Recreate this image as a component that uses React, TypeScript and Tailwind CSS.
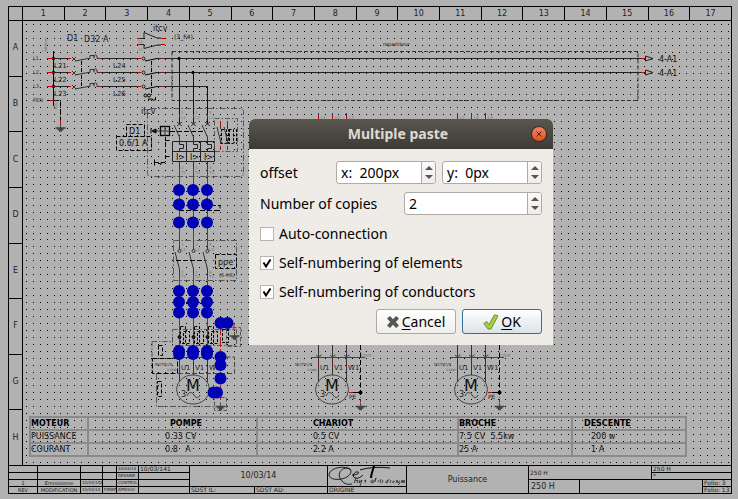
import React, { useState } from "react";

const COLUMNS = Array.from({ length: 17 }, (_, i) => i + 1);
const ROWS = ["A", "B", "C", "D", "E", "F", "G", "H"];

const GRID_STEP = 6.95;

function gridDots() {
  let d = "";
  for (let r = 0; r < 64; r++) {
    const y = Math.round(24 + r * GRID_STEP);
    for (let c = 0; c < 102; c++) {
      const x = Math.floor(26.2 + c * GRID_STEP);
      if (x < 730 && y < 464) d += `M${x} ${y}h1v1h-1z`;
    }
  }
  return d;
}

const DOTS = gridDots();
const PHASES = [179, 193, 207];

function Ground({ x, y }: { x: number; y: number }) {
  return (
    <g className="stroke-[#444]">
      <path d={`M${x} ${y - 4}V${y}`} />
      <path d={`M${x - 5} ${y}h10M${x - 3} ${y + 1.5}h6M${x - 1.5} ${y + 3}h3`} strokeWidth="1.3" />
    </g>
  );
}

function Tiny({ x, y, children }: { x: number; y: number; children: React.ReactNode }) {
  return (
    <text x={x} y={y} className="fill-[#777] stroke-none text-[4px]">
      {children}
    </text>
  );
}

function MotorSymbol({ x }: { x: number }) {
  return (
    <g>
      <ellipse cx={x} cy="389.5" rx="16.5" ry="14.5" className="stroke-[#444]" />
      <text x={x} y="391" textAnchor="middle" className="fill-[#111] stroke-none text-[16px]">M</text>
      <text x={x - 12} y="397" className="fill-[#222] stroke-none text-[8px]">3</text>
      <path d={`M${x - 6} 396c2-5 5-4 7-1s4 4 6 0`} className="stroke-[#333]" />
    </g>
  );
}

function IdleMotor({ x }: { x: number }) {
  const taps = [x - 14, x, x + 14];
  return (
    <g>
      {taps.map((t, i) => (
        <g key={t}>
          <path d={`M${t}.5 113v3`} className="stroke-[#2a2a90]" />
          <path d={`M${t}.5 116v3`} className="stroke-[#c00000]" />
          <Tiny x={t + 3} y={119}>{`L${i + 1}`}</Tiny>
          <path d={`M${t}.5 345V${i === 1 ? 375 : 382}`} className="stroke-[#333]" />
          <path d={`M${t - 2} 355l2.500 2l2.500 -2`} className="stroke-[#444]" />
          <path d={`M${t}.5 363.500v2.500`} className="stroke-[#b00020]" />
          <Tiny x={t + 2} y={357}>{i + 1}</Tiny>
          <text x={t + 2} y="370" className="fill-[#222] stroke-none text-[7px]">{["U1", "V1", "W1"][i]}</text>
        </g>
      ))}
      <path d={`M${x - 21} 357.500h54`} className="stroke-[#444]" />
      <Tiny x={x + 29} y={357}>CAVE</Tiny>
      <text x={x - 37} y="366" className="fill-[#444] stroke-none text-[4px]">MOTEUR</text>
      <text x={x - 25} y="371" className="fill-[#444] stroke-none text-[3px]">1.5kW</text>
      <path d={`M${x + 28}.5 345V398`} strokeDasharray="5 2.500" />
      <path d={`M${x + 17} 392.500h11`} />
      <path d={`M${x + 17} 392.500h4`} className="stroke-[#c00000]" />
      <circle cx={x + 28.5} cy="392.500" r="2" className="fill-black stroke-none" />
      <text x={x + 17} y="399" className="fill-[#222] stroke-none text-[6px]">PE</text>
      <path d={`M${x + 28}.5 399v3`} className="stroke-[#c00000]" />
      <Ground x={x + 28.5} y={406.5} />
      <MotorSymbol x={x} />
    </g>
  );
}

function SupplyLines() {
  return (
    <g>
      <path d="M53.500 51V106" />
      {[58, 72, 86].map((y, i) => (
        <g key={y}>
          <text x="33" y={y + 2} className="fill-[#333] stroke-none text-[5px]">{`L${i + 1}.`}</text>
          <path d={`M54 ${y}.5H68M102 ${y}.5H137M157 ${y}.5H${i === 2 ? 207 : 641}`} className="stroke-[#222]" />
          <path d={`M47 ${y}.5h6M68 ${y}.5h3M99 ${y}.5h3M137 ${y}.5h4M161 ${y}.5h3`} className="stroke-[#c00000]" />
          <path d={`M52 ${y - 1}l3 3M55 ${y - 1}l-3 3M72 ${y - 1}l4 4M76 ${y - 1}l-4 4`} className="stroke-[#333]" />
          <path d={`M75 ${y + 3}L88 ${y}.5h2v-3h4v3M94 ${y - 1}c0-3 3-3 3 0v1.500h2`} className="stroke-[#333]" />
          <circle cx="143.500" cy={y + 0.5} r="1.500" className="stroke-[#222]" />
          <path d={`M145 ${y + 3}L157 ${y}.5`} />
          <text x="54" y={y + 10} className="fill-[#222] stroke-none text-[7px]">{`L2${i + 1}`}</text>
          <text x="113" y={y + 10} className="fill-[#222] stroke-none text-[7px]">{`L2${i + 4}`}</text>
        </g>
      ))}
      <text x="33" y="102" className="fill-[#333] stroke-none text-[5px]">PEN</text>
      <path d="M47 100.500h4" />
      <path d="M50 100.500h4" className="stroke-[#c00000]" />
      <path d="M54 100.500h6.500V120" strokeDasharray="5 2.500" />
      <path d="M60.500 120v4" className="stroke-[#c00000]" />
      <Ground x={60.5} y={128} />
      <path d="M81.500 61V88M151.500 61V96" strokeDasharray="4 3" />
      <text transform="translate(47 52) rotate(-90)" className="fill-[#666] stroke-none text-[4px]">Arrivee</text>
      <text transform="translate(43 53) rotate(-90)" className="fill-[#888] stroke-none text-[3px]">xx</text>
      <text transform="translate(57 110) rotate(-90)" className="fill-[#777] stroke-none text-[4px]">400V</text>

      <text x="67" y="41" className="fill-[#222] stroke-none text-[8px]">D1</text>
      <text x="84" y="42" className="fill-[#222] stroke-none text-[8px]">D32 A</text>
      <text x="153" y="31" className="fill-[#222] stroke-none text-[8px]">itcv</text>
      <text x="174" y="39" className="fill-[#111] stroke-none text-[6px]">(3_F4)</text>
      <path d="M137 38.500h7v-6l13 5.500h4M139 44.500h5v4l13-3.500h4" className="stroke-[#222]" />
      <path d="M137 38.500h3M161 38.500h4M137 44.500h3M161 44.500h4" className="stroke-[#c00000]" />
      <Tiny x={138} y={43}>11</Tiny>
      <Tiny x={138} y={51}>11</Tiny>
      <circle cx="145.500" cy="95.500" r="1.500" />
      <circle cx="149" cy="95.500" r="1.500" />
      <path d="M148.500 101v-2h4v1h3v-3" />

      <path d="M172 51.500H638V100.500H172z" className="stroke-[#333]" strokeDasharray="4 2" />
      <text x="383" y="46" className="fill-[#111] stroke-none text-[5px]">repartiteur</text>
      {[58, 72].map((y) => (
        <g key={y}>
          <path d={`M641 ${y}.5h5`} className="stroke-[#c00000]" />
          <path d={`M645.500 ${y - 2}l7.500 2.500l-7.500 2.500z`} className="stroke-[#222]" />
          <text x="659" y={y + 4} className="fill-[#111] stroke-none text-[8px]">4-A1</text>
        </g>
      ))}
      <circle cx="179" cy="58.500" r="1.200" className="fill-black" />
      <circle cx="193" cy="72.500" r="1.200" className="fill-black" />
    </g>
  );
}

function BreakerGroup() {
  return (
    <g>
      <rect x="147.500" y="108.500" width="96" height="68" rx="3" className="stroke-[#555]" strokeDasharray="6 2 1.500 2" />
      <text x="141" y="114" className="fill-[#222] stroke-none text-[8px]">itcv</text>
      <rect x="126.500" y="124.500" width="18" height="12" strokeDasharray="4 2" />
      <text x="129" y="134" className="fill-[#111] stroke-none text-[8px]">D1</text>
      <rect x="116.500" y="136.500" width="35" height="14" strokeDasharray="4 2" />
      <text x="119" y="146" className="fill-[#111] stroke-none text-[8px]">0.6/1 A</text>
      <rect x="160.500" y="126.500" width="9" height="9" strokeWidth="1.300" />
      <path d="M165 126v10M155 131h15" className="stroke-[#333]" />
      <path d="M151 128.500v5M156 129l-4 2 4 2z" className="fill-[#222]" />
      <path d="M170 131.500H203" strokeDasharray="5 2" />
      <path d="M165.500 137V162M165.500 140.500h6M165.500 156.500h6" strokeDasharray="4 2" />
      <path d="M154.500 159.500v6M155 162.500h3l3 2v-2h4" />
      {PHASES.map((x, i) => (
        <g key={x}>
          <path d={`M${x}.5 ${[58, 72, 86][i]}V114M${x}.5 118V124`} className="stroke-[#111]" />
          <path d={`M${x}.5 114v4`} className="stroke-[#b00020]" />
          <path d={`M${x - 2} 122l5 4M${x + 3} 122l-5 4M${x}.5 141V137L${x - 5} 125`} className="stroke-[#333]" />
          <Tiny x={x + 2} y={114}>{i * 2 + 1}</Tiny>
          <Tiny x={x + 2} y={119}>{`L${i + 1}`}</Tiny>
          <Tiny x={x + 2} y={169}>{i * 2 + 2}</Tiny>
          <Tiny x={x + 2} y={174}>{`T${i + 1}`}</Tiny>
          <path d={`M${x - 7}.5 141.500h14v20h-14zM${x - 7}.5 151.500h14`} className="stroke-[#222]" />
          <path d={`M${x}.5 141.500v3h4v4h-4v3`} className="stroke-[#222]" />
          <text x={x - 3} y="159.500" className="fill-[#111] stroke-none text-[8px]">I&gt;</text>
          <path d={`M${x}.5 162v8`} className="stroke-[#333]" />
          <path d={`M${x}.5 169V345`} className="stroke-[#b5141c]" />
        </g>
      ))}
      <rect x="214.500" y="118.500" width="23" height="33" className="stroke-[#555]" strokeDasharray="5 2 1.500 2" />
      {[220, 227].map((x) => (
        <g key={x}>
          <path d={`M${x}.5 121v5M${x}.5 146v4`} className="stroke-[#c00000]" />
          <path d={`M${x}.5 126v3M${x}.5 144v-3L${x - 3} 127`} className="stroke-[#333]" />
          <rect x={x + 1.5} y="129.500" width="5" height="14" strokeDasharray="3 1.500" />
          <path d={`M${x + 9}.5 129V144`} strokeDasharray="3 1.500" />
        </g>
      ))}
      <path d="M179 210.500H215M215 210.500h5v-5h-7" strokeDasharray="5 2" />
    </g>
  );
}

function ContactorGroup() {
  return (
    <g>
      <rect x="173.500" y="240.500" width="63" height="40" className="stroke-[#555]" strokeDasharray="6 2 1.500 2" />
      {PHASES.map((x, i) => (
        <g key={x}>
          <path d={`M${x}.5 250V270`} className="stroke-[#b2b2b2]" strokeWidth="2" />
          <path d={`M${x}.5 246v4M${x}.5 272v3`} className="stroke-[#2a2a90]" />
          <circle cx={x + 0.5} cy="251" r="1.500" className="stroke-[#333]" />
          <path d={`M${x}.5 272v-3L${x - 4} 252`} className="stroke-[#333]" />
          <Tiny x={x + 2} y={246}>{i * 2 + 1}</Tiny>
          <Tiny x={x + 2} y={251}>{`L${i + 1}`}</Tiny>
          <Tiny x={x + 2} y={274}>{i * 2 + 2}</Tiny>
          <Tiny x={x + 2} y={278}>{`T${i + 1}`}</Tiny>
        </g>
      ))}
      <path d="M176 260.500H205" strokeDasharray="5 2" />
      <rect x="215.500" y="254.500" width="21" height="14" strokeDasharray="4 2" />
      <text x="218" y="265" className="fill-[#111] stroke-none text-[8px]">ppe</text>
      <text x="219" y="277" className="fill-[#222] stroke-none text-[5px]">(6-H6)</text>
      <path d="M179 303.500H207" strokeDasharray="5 2" />
    </g>
  );
}

function SelectedMotorGroup() {
  return (
    <g>
      <rect x="172.500" y="329.500" width="64" height="16" className="stroke-[#555]" strokeDasharray="5 2 1.500 2" />
      <rect x="226.500" y="327.500" width="14" height="19" className="stroke-[#555]" strokeDasharray="4 2" />
      {PHASES.map((x, i) => (
        <g key={x}>
          <rect x={x + 1.5} y="326.500" width="5" height="17" strokeDasharray="3 1.500" />
          <rect x={x + 4.5} y="331.500" width="6" height="12" strokeDasharray="3 1.500" />
          <circle cx={x + 0.5} cy="337" r="1.500" className="fill-[#222]" />
          <path d={`M${x}.5 355V${i === 1 ? 375 : 382}`} className="stroke-[#333]" />
          <text x={x + 2} y="370" className="fill-[#222] stroke-none text-[7px]">{["U1", "V1", "W1"][i]}</text>
        </g>
      ))}
      <rect x="222.500" y="329.500" width="6" height="13" strokeDasharray="3 1.500" />
      <path d="M227 323.500h7V330" className="stroke-[#b5141c]" />
      <Ground x={234.5} y={336} />
      <path d="M173 357.500H214" className="stroke-[#444]" />
      <path d="M220.500 325V400" className="stroke-[#b5141c]" strokeDasharray="10 2" />
      <path d="M152 341.500H172M152 341.500V373" className="stroke-[#555]" strokeDasharray="5 2 1.500 2" />
      <rect x="152.500" y="358.500" width="25" height="15" strokeDasharray="5 2" />
      <text x="155" y="366" className="fill-[#444] stroke-none text-[4px]">MOTEUR</text>
      <text x="167" y="371" className="fill-[#444] stroke-none text-[3px]">1.5kW</text>
      <path d="M178 373.500H234.500V357H225" strokeDasharray="5 2" className="stroke-[#444]" />
      <rect x="158.500" y="345.500" width="4" height="10" strokeDasharray="4 2" />
      <rect x="157.500" y="381.500" width="4" height="15" strokeDasharray="4 2" />
      <path d="M156.500 374V406.500H215" className="stroke-[#555]" strokeDasharray="6 2 1.500 2" />
      <rect x="214.500" y="397.500" width="12" height="13" className="stroke-[#555]" strokeDasharray="4 2" />
      <Ground x={220.5} y={406.5} />
      <MotorSymbol x={193} />
    </g>
  );
}

const SELECTION: [number, number][] = [
  ...[190, 204.5, 222.5, 291, 302, 312.5, 351, 354].flatMap((y) =>
    PHASES.map((x) => [x, y] as [number, number])
  ),
  [220.5, 323],
  [227.5, 323],
  [220.5, 357],
  [220.5, 365],
  [220.5, 378.5],
  [213.5, 392.5],
  [217, 392.5],
];

function Schematic() {
  return (
    <svg
      viewBox="23 21 708 444"
      className="block h-[444px] w-[708px] fill-none stroke-black font-['DejaVu_Sans',sans-serif]"
      aria-label="Wiring diagram"
    >
      <path d={DOTS} className="fill-black stroke-none" shapeRendering="crispEdges" />
      <SupplyLines />
      <BreakerGroup />
      <ContactorGroup />
      <SelectedMotorGroup />
      <IdleMotor x={332} />
      <IdleMotor x={471} />
      {SELECTION.map(([x, y], i) => (
        <circle key={i} cx={x} cy={y} r="6" className="fill-[#0000b4] stroke-none" />
      ))}
    </svg>
  );
}

const td = "border-2 border-[#8a8a8a] p-0 text-left leading-[10px] whitespace-pre";

function MotorTable() {
  return (
    <table className="w-[656px] table-fixed border-collapse text-[8px] text-[#111]">
      <colgroup>
        <col className="w-[58px]" />
        <col className="w-[169px]" />
        <col className="w-[201px]" />
        <col className="w-[114px]" />
        <col className="w-[114px]" />
      </colgroup>
      <thead>
        <tr className="h-[13px] text-black">
          <th className={td}>MOTEUR</th>
          <th className={`${td} pl-[81px]`}>POMPE</th>
          <th className={`${td} pl-[55px]`}>CHARIOT</th>
          <th className={td}>BROCHE</th>
          <th className={`${td} pl-[11px]`}>DESCENTE</th>
        </tr>
      </thead>
      <tbody>
        <tr className="h-[13px]">
          <td className={td}>PUISSANCE</td>
          <td className={`${td} pl-[76px]`}>0.33 CV</td>
          <td className={`${td} pl-[55px]`}>0.5 CV</td>
          <td className={td}>7.5 CV  5.5kw</td>
          <td className={`${td} pl-[18px]`}>200 w</td>
        </tr>
        <tr className="h-[13px]">
          <td className={td}>COURANT</td>
          <td className={`${td} pl-[76px]`}>0.8   A</td>
          <td className={`${td} pl-[55px]`}>2.2 A</td>
          <td className={td}>25 A</td>
          <td className={`${td} pl-[18px]`}>1 A</td>
        </tr>
      </tbody>
    </table>
  );
}

const REVISION = [
  ["", "", "", "", "10/03/14", "10/03/141"],
  ["", "", "", "", "DESSINE", ""],
  ["1", "Emissionne", "10/03/142", "", "CONTROL", ""],
  ["REV", "MODIFICATION", "10/03/14", "FIRME", "APROUV", ""],
];

const REVISION_CELLS = [
  "w-[29px] text-center text-[5px]",
  "w-[43px] text-center text-[5px]",
  "w-[22px] pl-px text-[4px]",
  "w-[14px] pl-px text-[4px]",
  "w-[22px] pl-px text-[4px]",
  "w-[51px] pl-px text-[6px]",
];

function Logo() {
  return (
    <svg viewBox="0 0 78 20" className="block h-5 w-[78px] fill-none stroke-black" aria-label="QET">
      <path d="M23 4C18-1 3 1 1 8c-1 6 11 7 18 3 6-4 5-9-1-9C11 3 9 10 14 15c2 3 7 4 10 3" strokeWidth=".800" />
      <path d="M24 9c5 0 8-2 6-3-3-1-7 4-3 6 3 1 6-1 8-3" strokeWidth=".900" />
      <path d="M32 4C42 1 52 1 62 2" strokeWidth=".900" />
      <path d="M46 0C45 4 43 8 43 12" strokeWidth="2" />
      <path
        d="M28 12l-2 5M27 15l3-1-1 3M32 14l-1 3 3-3-2 6M36 15l2-1-1 3M44 16c2-1 1-3-1-1-1 2 1 2 3 1l2-4-1 4M50 16l1-2M52 17l1-4M55 14l-1 3M60 15c-2-1-3 2-1 2l2-4M63 14l-1 3M66 15c-2 0-2 3 0 1l1-1M68 17l1-3 1 3M72 15c-2 0-2 2 0 2l-2 2M73 17l1-3 1 3 1-3 1 3"
        strokeWidth=".600"
      />
    </svg>
  );
}

function TitleBlock() {
  return (
    <footer className="flex h-7 border-t border-black text-[#222]">
      <div className="flex flex-col">
        {REVISION.map((row, r) => (
          <div key={r} className="flex h-[7px] border-b border-black last:border-b-0">
            {row.map((cell, c) => (
              <div key={c} className={`${REVISION_CELLS[c]} overflow-hidden border-r border-black leading-[6px] whitespace-nowrap`}>
                {cell}
              </div>
            ))}
          </div>
        ))}
      </div>
      <div className="flex w-[138px] flex-col border-r border-black">
        <div className="flex h-[21px] items-center justify-center border-b border-black text-[8px]">10/03/14</div>
        <div className="flex h-[6px] text-[6px] leading-[6px]">
          <div className="w-[65px] border-r border-black pl-px">SDST IL:</div>
          <div className="pl-px">SDST AD:</div>
        </div>
      </div>
      <div className="flex w-[79px] flex-col border-r border-black">
        <div className="h-[21px] overflow-hidden border-b border-black">
          <Logo />
        </div>
        <div className="pl-px text-[6px] leading-[6px]">ORIGINE</div>
      </div>
      <div className="flex w-[122px] items-center justify-center border-r border-black text-[8px]">Puissance</div>
      <div className="flex flex-1 flex-col">
        <div className="flex h-[14px] border-b border-black">
          <div className="flex flex-1 items-center border-r border-black pl-px text-[6px]">250 H</div>
          <div className="flex w-[79px] flex-col text-[6px] leading-[6px]">
            <div className="h-[7px] border-b border-black pl-px">250 H</div>
            <div className="pl-px">*</div>
          </div>
        </div>
        <div className="flex h-[13px]">
          <div className="flex w-[51px] items-center border-r border-black pl-0.5 text-[8px]">250 H</div>
          <div className="flex-1 border-r border-black" />
          <div className="flex w-7 flex-col text-[6px] leading-[6px]">
            <div className="h-[7px] border-b border-black pl-px whitespace-nowrap">Folio: 3</div>
            <div className="pl-px whitespace-nowrap">Folio: 13</div>
          </div>
        </div>
      </div>
    </footer>
  );
}

function SpinBox({ id, label, initial, className }: { id: string; label?: string; initial: string; className: string }) {
  const [value, setValue] = useState(initial);
  const step = (by: number) =>
    setValue((v) => v.replace(/\d+/, (n) => String(Math.max(0, Number(n) + by))));
  return (
    <div className={`flex h-[23px] overflow-hidden rounded-[3px] border border-[#aeaaa5] bg-white ${className}`}>
      <input
        id={id}
        aria-label={label}
        value={value}
        onChange={(e) => setValue(e.target.value)}
        className="w-0 min-w-0 flex-1 bg-transparent pl-1 outline-none"
      />
      <div className="flex w-[14px] flex-col border-l border-[#aeaaa5] bg-linear-to-b from-[#fbfaf9] to-[#efedeb]">
        <button type="button" aria-label="Increase" onClick={() => step(1)} className="flex flex-1 items-end justify-center pb-[3px]">
          <svg viewBox="0 0 8 4" className="h-1 w-2 fill-[#555]"><path d="M0 4L4 0l4 4z" /></svg>
        </button>
        <button type="button" aria-label="Decrease" onClick={() => step(-1)} className="flex flex-1 items-start justify-center pt-0.5">
          <svg viewBox="0 0 8 4" className="h-1 w-2 fill-[#555]"><path d="M0 0l4 4 4-4z" /></svg>
        </button>
      </div>
    </div>
  );
}

function CheckRow({ label, checked }: { label: string; checked?: boolean }) {
  return (
    <label className="flex h-[29px] items-center gap-[5px]">
      <span className="grid size-[14px]">
        <input
          type="checkbox"
          defaultChecked={checked}
          className="peer col-start-1 row-start-1 size-[14px] appearance-none border border-[#b8b5b0] bg-white"
        />
        <svg
          viewBox="0 0 14 14"
          className="pointer-events-none invisible col-start-1 row-start-1 size-[14px] fill-none stroke-black stroke-2 peer-checked:visible"
        >
          <path d="M3.500 6.500L6 10.500L10.500 3.500" />
        </svg>
      </span>
      {label}
    </label>
  );
}

function PasteDialog() {
  return (
    <form
      role="dialog"
      aria-labelledby="dialog-title"
      onSubmit={(e) => e.preventDefault()}
      className="w-[304px] overflow-hidden rounded-t-md bg-[#efebe7] font-['Noto_Sans','Open_Sans',sans-serif] text-[14px] leading-5 text-black"
    >
      <header className="grid h-[30px] grid-cols-[1fr_auto_1fr] items-center bg-linear-to-b from-[#5a574e] to-[#3d3b36] pr-[6px]">
        <h1 id="dialog-title" className="col-start-2 text-[14px] font-bold text-[#dfdbd2]">Multiple paste</h1>
        <button
          type="button"
          aria-label="Close"
          className="flex size-4 items-center justify-center justify-self-end rounded-full border border-[#3a2a22] bg-linear-to-b from-[#f58260] to-[#e5501f]"
        >
          <svg viewBox="0 0 6 6" className="size-[6px] fill-none stroke-[#4a2010]"><path d="M.5 .5l5 5M5.500 .5l-5 5" /></svg>
        </button>
      </header>
      <div className="px-[11px] pt-3 pb-[11px]">
        <div className="flex items-center gap-[6px]">
          <label htmlFor="offset-x" className="flex-1">offset</label>
          <SpinBox id="offset-x" initial="x:  200px" className="w-[100px]" />
          <SpinBox id="offset-y" label="y offset" initial="y:  0px" className="w-[100px]" />
        </div>
        <div className="mt-2 mb-1 flex items-center">
          <label htmlFor="copies" className="flex-1">Number of copies</label>
          <SpinBox id="copies" initial="2" className="w-[138px]" />
        </div>
        <CheckRow label="Auto-connection" />
        <CheckRow label="Self-numbering of elements" checked />
        <CheckRow label="Self-numbering of conductors" checked />
        <div className="mt-[3px] flex justify-end gap-[6px]">
          <button
            type="button"
            className="flex h-[25px] w-20 items-center justify-center gap-[3px] rounded-[3px] border border-[#aeaaa5] bg-linear-to-b from-white to-[#efeeec]"
          >
            <svg viewBox="0 0 12 12" className="size-3 fill-[#555]">
              <path d="M0 2.500L3 0l3 3.200L9 0l3 2.500L8.800 6 12 9.500 9 12 6 8.800 3 12 0 9.500 3.200 6z" />
            </svg>
            <span><u className="underline-offset-2">C</u>ancel</span>
          </button>
          <button
            type="submit"
            className="flex h-[25px] w-20 items-center justify-center gap-0.5 rounded-[3px] border border-[#2f6f9a] bg-linear-to-b from-white to-[#dbe3e8]"
          >
            <svg viewBox="0 0 16 16" className="size-4 fill-[#a4cf3c] stroke-[#6f8f3a]">
              <path d="M.8 9.500L3.800 7.500 6 10.500 11.500.8l3.500 1L8 15H5z" strokeWidth="1" />
            </svg>
            <span><u className="underline-offset-2">O</u>K</span>
          </button>
        </div>
      </div>
    </form>
  );
}

export default function App() {
  return (
    <main className="relative flex min-h-screen flex-col overflow-hidden bg-[#b2b2b2] pt-[6px] pr-[6px] pb-[5px] pl-2 font-['DejaVu_Sans',sans-serif]">
      <section className="flex flex-1 flex-col border border-black">
        <div className="flex h-[14px] border-b border-black text-[8px] text-[#222]">
          <div className="w-[14px] border-r border-black" />
          {COLUMNS.map((n) => (
            <div key={n} className="flex flex-1 items-center justify-center border-r border-black last:border-r-0">{n}</div>
          ))}
        </div>
        <div className="flex flex-1">
          <div className="flex w-[14px] flex-col border-r border-black text-[8px] text-[#222]">
            {ROWS.map((r) => (
              <div key={r} className="flex flex-1 items-center justify-center border-b border-black last:border-b-0">{r}</div>
            ))}
          </div>
          <div className="relative min-w-0 flex-1 overflow-hidden">
            <Schematic />
            <div className="absolute top-[395px] left-[6px]">
              <MotorTable />
            </div>
          </div>
        </div>
        <TitleBlock />
      </section>
      <div className="absolute top-[119px] left-[249px]">
        <PasteDialog />
      </div>
    </main>
  );
}
